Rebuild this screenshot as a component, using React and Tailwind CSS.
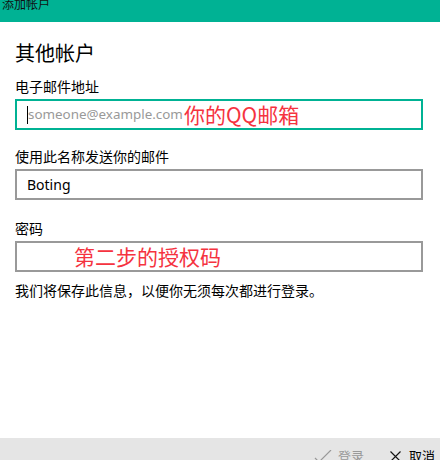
const font = { fontFamily: '"Noto Sans", "Noto Sans CJK SC", sans-serif' };

const Field = ({ label, children, active, className = '' }) => (
  <div className={className}>
    <div className="text-[14px] leading-[18px] text-black">{label}</div>
    <div
      className={`relative mt-[4px] h-[31px] w-[408px] border-2 bg-white ${
        active ? 'border-[#00b294]' : 'border-[#999999]'
      }`}
    >
      {children}
    </div>
  </div>
);

const App = () => {
  return (
    <div
      className="flex h-[460px] w-[440px] flex-col overflow-hidden bg-white"
      style={{ fontFamily: '"Noto Sans CJK SC", "Noto Sans", sans-serif' }}
    >
      {/* title bar */}
      <div className="h-[22px] shrink-0 overflow-hidden bg-[#00b294] pl-[2px]">
        <div className="-mt-[4px] text-[12px] leading-[16px] text-[#111]">添加帐户</div>
      </div>

      <div className="flex-1 px-[15px]">
        <h1 className="mt-[17px] text-[20px] font-normal leading-[28px] text-black">其他帐户</h1>

        <div className="mt-[10px] flex flex-col gap-[17px]">
          <Field label="电子邮件地址" active>
            <div className="flex h-full items-center pl-[10px]">
              <span className="h-[18px] w-px bg-black" />
              <span className="text-[13.4px] text-[#999]" style={font}>someone@example.com</span>
            </div>
            <span className="absolute left-[167px] top-[-2px] text-[21px] leading-[30px] text-[#f5333f]">
              你的QQ邮箱
            </span>
          </Field>

          <Field label="使用此名称发送你的邮件">
            <div className="flex h-full items-center pl-[10px] text-[14px] text-black" style={font}>
              Boting
            </div>
          </Field>

          <Field label="密码" className="mt-[2px]">
            <span className="absolute left-[57px] top-[-2px] text-[21px] leading-[30px] text-[#f5333f]">
              第二步的授权码
            </span>
          </Field>
        </div>

        <p className="mt-[9px] text-[14px] leading-[18px] text-black">
          我们将保存此信息，以便你无须每次都进行登录。
        </p>
      </div>

      {/* bottom command bar */}
      <div className="flex h-[22px] shrink-0 items-start justify-end gap-[26px] bg-[#e5e5e5] pr-[5px] pt-[10px]">
        <div className="flex items-center gap-[6px] text-[13px] leading-[16px] text-[#999]">
          <svg width="18" height="12" viewBox="0 0 18 12" fill="none" stroke="#999" strokeWidth="1.2">
            <path d="M1 8 L5 12 L17 0" />
          </svg>
          登录
        </div>
        <div className="flex items-center gap-[8px] text-[13px] leading-[16px] text-black">
          <svg width="11" height="11" viewBox="0 0 11 11" fill="none" stroke="#111" strokeWidth="1.2">
            <path d="M0.5 0.5 L10.5 10.5 M10.5 0.5 L0.5 10.5" />
          </svg>
          取消
        </div>
      </div>
    </div>
  );
};

export default App;
